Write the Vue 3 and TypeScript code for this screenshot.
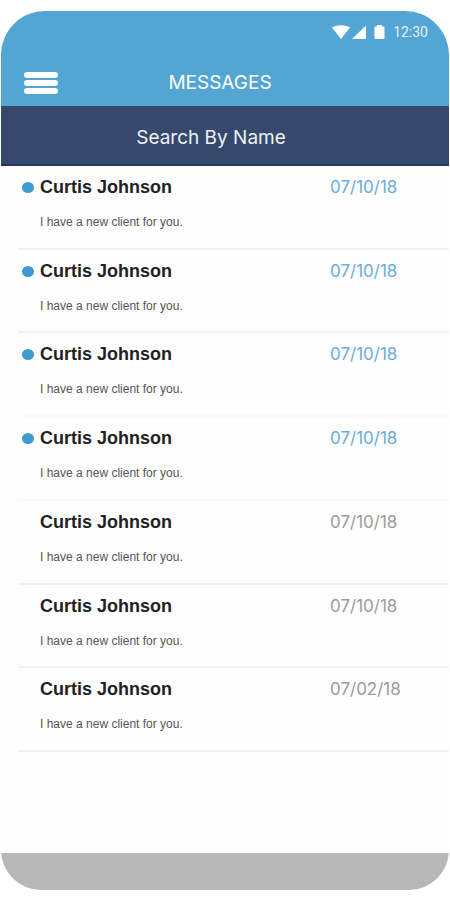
<script setup lang="ts">
import { ref } from 'vue'

interface Message {
  id: number
  sender: string
  preview: string
  date: string
  unread: boolean
  faint?: boolean
}

const query = ref('')

const preview = 'I have a new client for you.'

const messages: Message[] = [
  { id: 1, sender: 'Curtis Johnson', preview, date: '07/10/18', unread: true },
  { id: 2, sender: 'Curtis Johnson', preview, date: '07/10/18', unread: true },
  { id: 3, sender: 'Curtis Johnson', preview, date: '07/10/18', unread: true, faint: true },
  { id: 4, sender: 'Curtis Johnson', preview, date: '07/10/18', unread: true, faint: true },
  { id: 5, sender: 'Curtis Johnson', preview, date: '07/10/18', unread: false },
  { id: 6, sender: 'Curtis Johnson', preview, date: '07/10/18', unread: false },
  { id: 7, sender: 'Curtis Johnson', preview, date: '07/02/18', unread: false },
]
</script>

<template>
  <div class="phone">
    <header class="top">
      <div class="status">
        <svg class="signals" width="54" height="16" viewBox="0 0 54 16" fill="#fff" aria-hidden="true">
          <path d="M1 3.500C6 .5 14 .5 19 3.500L10 15Z" />
          <path d="M35 1.500V15H21Z" />
          <path d="M46 1h5v1.500h1.500q1 0 1 1V14q0 1-1 1h-8q-1 0-1-1V3.500q0-1 1-1H46Z" />
        </svg>
        <span class="clock">12:30</span>
      </div>
      <div class="bar">
        <button class="menu" type="button" aria-label="Menu">
          <span></span>
          <span></span>
          <span></span>
        </button>
        <h1 class="title">MESSAGES</h1>
      </div>
    </header>
    <div class="search">
      <input v-model="query" class="field" type="text" placeholder="Search By Name" aria-label="Search By Name" />
    </div>
    <ul class="list">
      <li v-for="m in messages" :key="m.id" class="row" :class="{ unread: m.unread, faint: m.faint }">
        <span class="dot"></span>
        <div class="body">
          <h2 class="sender">{{ m.sender }}</h2>
          <p class="preview">{{ m.preview }}</p>
        </div>
        <time class="date">{{ m.date }}</time>
      </li>
    </ul>
    <footer class="foot"></footer>
  </div>
</template>

<style>
body {
  background: #fff;
}
</style>

<style scoped>
.phone {
  box-sizing: border-box;
  display: flex;
  flex-direction: column;
  min-height: calc(100vh - 21px);
  margin: 11px 1px 10px;
  overflow: hidden;
  border-radius: 44px 44px 40px 40px;
  background: #fefefe;
  font-family: Inter, "Liberation Sans", sans-serif;
}

.top {
  background: #53a6d4;
  color: #fff;
}

.status {
  display: flex;
  align-items: center;
  justify-content: flex-end;
  gap: 8px;
  height: 20px;
  padding: 11px 21px 0 0;
}

.clock {
  font-family: Roboto, sans-serif;
  font-size: 14px;
  line-height: 20px;
  color: #e4f2fa;
}

.bar {
  box-sizing: border-box;
  display: grid;
  grid-template-columns: 1fr auto 1fr;
  align-items: center;
  height: 64px;
  padding: 18px 10px 0 0;
}

.menu {
  display: flex;
  flex-direction: column;
  gap: 2px;
  width: 34px;
  margin-left: 23px;
  padding: 0;
  border: 0;
  background: none;
  cursor: pointer;
}

.menu span {
  height: 6px;
  border-radius: 3px;
  background: #fff;
}

.title {
  margin: 0;
  font-size: 19px;
  font-weight: 400;
  line-height: 24px;
}

.search {
  box-sizing: border-box;
  height: 60px;
  padding: 0 28px 0 0;
  border-bottom: 2px solid #1f3765;
  background: #36486b;
}

.field {
  box-sizing: border-box;
  width: 100%;
  height: 58px;
  padding: 4px 0 0;
  border: 0;
  outline: 0;
  background: none;
  color: #fff;
  font-family: inherit;
  font-size: 19px;
  text-align: center;
}

.field::placeholder {
  color: #eef1f7;
  opacity: 1;
}

.list {
  display: flex;
  flex: 1;
  flex-direction: column;
  margin: 0;
  padding: 0 0 101px 17px;
  list-style: none;
}

.row {
  box-sizing: border-box;
  display: flex;
  flex: 1 0 72px;
  align-items: flex-start;
  padding: 9px 0 0 4px;
  border-bottom: 2px solid #f1f1f1;
}

.row.faint {
  border-bottom-color: #fafafa;
}

.dot {
  width: 12px;
  height: 11px;
  margin: 7px 6px 0 0;
  border-radius: 50%;
}

.unread .dot {
  background: #3f9bcf;
}

.body {
  flex: 1;
}

.sender {
  margin: 0;
  color: #222;
  font-family: "Liberation Sans", Arial, sans-serif;
  font-size: 18px;
  font-weight: 700;
  line-height: 24px;
}

.preview {
  margin: 15px 0 0;
  color: #555;
  font-family: "Liberation Sans", Arial, sans-serif;
  font-size: 12px;
  line-height: 16px;
}

.date {
  width: 119px;
  color: #9b9b9b;
  font-size: 17px;
  line-height: 24px;
}

.unread .date {
  color: #6bacdb;
}

.foot {
  height: 37px;
  background: #b7b7b7;
}
</style>
